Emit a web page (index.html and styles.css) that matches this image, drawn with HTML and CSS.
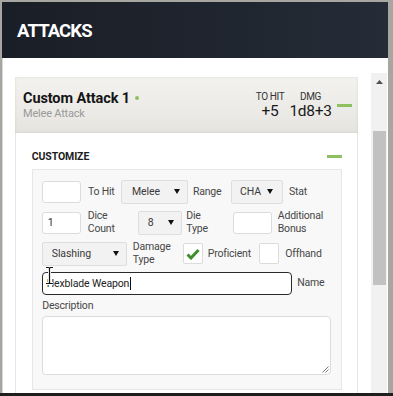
FILE: index.html
```html
<!DOCTYPE html>
<html lang="en">
<head>
<meta charset="utf-8">
<title>Attacks</title>
<link rel="stylesheet" href="styles.css">
</head>
<body>
<div class="sheet">
  <header class="sheet-head"><h1 class="sheet-title">ATTACKS</h1></header>
  <div class="sheet-body">
    <div class="content">
      <div class="attack">
        <div class="attack-head">
          <div class="name-block">
            <div class="attack-name">Custom Attack 1 <span class="dot"></span></div>
            <div class="attack-sub">Melee Attack</div>
          </div>
          <div class="stat">
            <div class="stat-label">TO HIT</div>
            <div class="stat-value">+5</div>
          </div>
          <div class="stat stat-dmg">
            <div class="stat-label">DMG</div>
            <div class="stat-value">1d8+3</div>
          </div>
          <span class="minus minus-head"></span>
        </div>
        <div class="attack-body">
          <div class="cust-head">
            <span class="cust-title">CUSTOMIZE</span>
            <span class="minus"></span>
          </div>
          <div class="cust-panel">
            <div class="row">
              <div class="input w39"></div>
              <span class="label l-tohit">To Hit</span>
              <div class="select w67"><span>Melee</span><svg class="caret" width="6" height="5" viewBox="0 0 6 5"><path d="M0 0H6L3 5Z"/></svg></div>
              <span class="label l-range">Range</span>
              <div class="select w52"><span>CHA</span><svg class="caret" width="6" height="5" viewBox="0 0 6 5"><path d="M0 0H6L3 5Z"/></svg></div>
              <span class="label l-stat">Stat</span>
            </div>
            <div class="row">
              <div class="input w39">1</div>
              <span class="label l-dice">Dice<br>Count</span>
              <div class="select w44"><span>8</span><svg class="caret" width="6" height="5" viewBox="0 0 6 5"><path d="M0 0H6L3 5Z"/></svg></div>
              <span class="label l-die">Die<br>Type</span>
              <div class="input w39"></div>
              <span class="label l-add">Additional<br>Bonus</span>
            </div>
            <div class="row">
              <div class="select w85"><span>Slashing</span><svg class="caret" width="6" height="5" viewBox="0 0 6 5"><path d="M0 0H6L3 5Z"/></svg></div>
              <span class="label l-dmg">Damage<br>Type</span>
              <div class="check"><svg width="14" height="12" viewBox="0 0 14 12"><path d="M1.5 6.5L5 10L12.5 2" fill="none" stroke="#3f8d2c" stroke-width="3"/></svg></div>
              <span class="label l-prof">Proficient</span>
              <div class="check"></div>
              <span class="label l-off">Offhand</span>
            </div>
            <div class="row row-name">
              <div class="input name-input">Hexblade Weapon<span class="caret-line"></span>
                <svg class="ibeam" width="9" height="19" viewBox="0 0 9 19"><path d="M1 1.5H3.5Q4.5 1.5 4.5 2.5V16.5Q4.5 17.5 3.5 17.5H1M8 1.5H5.5Q4.5 1.5 4.5 2.5M4.5 16.5Q4.5 17.5 5.5 17.5H8" fill="none" stroke="#fff" stroke-width="3"/><path d="M1 1.5H3.5Q4.5 1.5 4.5 2.5V16.5Q4.5 17.5 3.5 17.5H1M8 1.5H5.5Q4.5 1.5 4.5 2.5M4.5 16.5Q4.5 17.5 5.5 17.5H8" fill="none" stroke="#111" stroke-width="1.2"/></svg>
              </div>
              <span class="label l-name">Name</span>
            </div>
            <div class="desc-label">Description</div>
            <div class="textarea"><svg class="grip" width="8" height="8" viewBox="0 0 8 8"><path d="M7.5 1.5L1.5 7.5M7.5 4.5L4.5 7.5" stroke="#777" stroke-width="1"/></svg></div>
          </div>
        </div>
      </div>
    </div>
    <div class="scrollbar">
      <div class="scroll-up"><svg width="7" height="4" viewBox="0 0 7 4"><path d="M0 4H7L3.5 0Z" fill="#505050"/></svg></div>
      <div class="thumb"></div>
    </div>
  </div>
</div>
<div class="bottom-bar"></div>
</body>
</html>
```

FILE: styles.css
```css
* { box-sizing: border-box; }
html, body { margin: 0; padding: 0; }
body {
  width: 393px;
  height: 396px;
  overflow: hidden;
  background: #a7a6a0;
  font-family: Roboto, "Noto Sans", sans-serif;
  display: flex;
  flex-direction: column;
}
.sheet {
  margin: 2px 5px 0 2px;
  width: 386px;
  height: 391px;
  display: flex;
  flex-direction: column;
}
.sheet-head {
  height: 56px;
  flex: none;
  background: linear-gradient(90deg, #1a1e26 0%, #202630 60%, #252c37 100%);
  display: flex;
  align-items: center;
  padding-left: 15px;
}
.sheet-title {
  margin: 0;
  color: #fff;
  font-size: 18.5px;
  font-weight: 700;
  letter-spacing: -0.9px;
  line-height: 22px;
  padding-top: 2px;
}
.sheet-body {
  flex: 1;
  background: #fff;
  border-left: 1px solid #d9d9d9;
  display: flex;
  overflow: hidden;
}
.content {
  margin-left: 12px;
  width: 343px;
  padding-top: 19px;
  flex: none;
}
.attack-head {
  height: 56px;
  display: flex;
  align-items: center;
  padding: 0 6px 0 8px;
  background: linear-gradient(#f3f2ef, #eae9e5 70%, #e4e3de);
  box-shadow: inset 0 0 3px rgba(0,0,0,0.10);
}
.name-block { flex: 1; }
.attack-name {
  font-size: 14.5px;
  font-weight: 700;
  color: #151515;
  line-height: 17px;
  letter-spacing: -0.1px;
}
.dot {
  display: inline-block;
  width: 4px;
  height: 4px;
  border-radius: 50%;
  background: #8dc060;
  vertical-align: 3px;
  margin-left: 1px;
}
.attack-sub {
  font-size: 11px;
  color: #9a9a9a;
  line-height: 13px;
  letter-spacing: -0.2px;
}
.stat {
  width: 36px;
  text-align: center;
  color: #2a2a2a;
}
.stat-dmg { width: 45px; }
.stat-label {
  font-size: 10px;
  line-height: 12px;
  letter-spacing: -0.4px;
  color: #333;
}
.stat-value {
  font-size: 15.5px;
  line-height: 17px;
  letter-spacing: -0.3px;
  color: #1a1a1a;
}
.minus {
  display: block;
  width: 15px;
  height: 3px;
  background: #8dc060;
}
.minus-head { margin-left: 4px; }
.attack-body {
  border-left: 1px solid #e6e6e6;
  border-right: 1px solid #e6e6e6;
  padding: 16px 15px 40px 15.7px;
}
.cust-head {
  height: 14px;
  display: flex;
  align-items: center;
  justify-content: space-between;
  margin-bottom: 6.3px;
}
.cust-title {
  font-size: 10.5px;
  font-weight: 700;
  color: #1d1d1d;
  letter-spacing: -0.1px;
}
.cust-panel {
  background: #f8f8f8;
  border: 1px solid #e7e7e7;
  padding: 9.7px 10px 14px 9.6px;
}
.row {
  display: flex;
  align-items: center;
  height: 24px;
  margin-bottom: 7px;
}
.row-name { height: 23px; margin-top: -1px; margin-bottom: 0; }
.label {
  font-size: 10.5px;
  line-height: 12.5px;
  color: #474747;
  letter-spacing: -0.2px;
  flex: none;
}
.input {
  height: 22px;
  background: #fff;
  border: 1px solid #dcdcdc;
  border-radius: 3px;
  font-size: 10.5px;
  color: #333;
  padding-left: 4.5px;
  display: flex;
  align-items: center;
  flex: none;
}
.select {
  height: 24px;
  background: #f2f2f2;
  border: 1px solid #dedede;
  border-radius: 2px;
  font-size: 10.5px;
  color: #3a3a3a;
  letter-spacing: -0.1px;
  display: flex;
  align-items: center;
  justify-content: space-between;
  padding: 0 7px 0 9px;
  flex: none;
}
.caret path { fill: #111; }
.check {
  width: 20px;
  height: 21px;
  background: #fff;
  border: 1px solid #dcdcdc;
  border-radius: 2px;
  display: flex;
  align-items: center;
  justify-content: center;
  flex: none;
}
.w39 { width: 39px; }
.w67 { width: 67px; padding-left: 10px; }
.w52 { width: 52px; padding-left: 8px; padding-right: 9px; }
.w44 { width: 44px; }
.w85 { width: 84.5px; padding-left: 8.5px; }
.l-tohit { margin-left: 6.7px; width: 33px; }
.l-range { margin-left: 5px; width: 38px; }
.l-stat { margin-left: 6px; }
.l-dice { margin-left: 6.5px; width: 50px; }
.l-die { margin-left: 4.5px; width: 46.5px; }
.l-add { margin-left: 6px; }
.l-dmg { margin-left: 6px; width: 50px; }
.l-prof { margin-left: 5px; width: 51px; }
.l-off { margin-left: 6.5px; }
.l-name { margin-left: 5.5px; }
.name-input {
  width: 249.5px;
  height: 23px;
  border: 1.5px solid #2b2b2b;
  border-radius: 4px;
  padding-left: 3.5px;
  color: #222;
  position: relative;
  letter-spacing: -0.15px;
}
.caret-line {
  display: inline-block;
  width: 1px;
  height: 13px;
  background: #111;
  margin-left: 1px;
}
.ibeam {
  position: absolute;
  left: 2px;
  top: -7px;
}
.desc-label {
  font-size: 10.5px;
  line-height: 13px;
  color: #474747;
  letter-spacing: -0.2px;
  margin-top: 4.5px;
  margin-bottom: 3.5px;
}
.textarea {
  height: 59px;
  width: 289px;
  background: #fff;
  border: 1px solid #dcdcdc;
  border-radius: 4px;
  display: flex;
  align-items: flex-end;
  justify-content: flex-end;
  padding: 0 1px 1px 0;
}
.scrollbar {
  margin-left: 13px;
  margin-top: 15px;
  width: 16px;
  background: #f1f1f1;
  flex: none;
}
.scroll-up {
  height: 17px;
  display: flex;
  align-items: center;
  justify-content: center;
}
.thumb {
  margin: 41px 1px 0 1.5px;
  height: 154px;
  background: #c1c1c1;
}
.bottom-bar {
  height: 3px;
  background: #1e1e1e;
}
```
